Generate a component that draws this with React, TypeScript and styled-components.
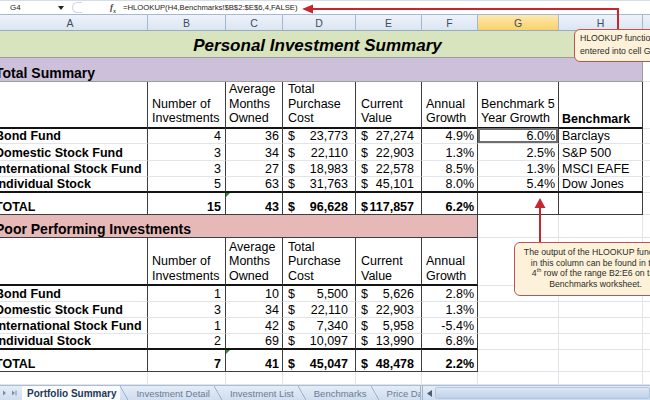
import React from "react";
import styled, { createGlobalStyle, css } from "styled-components";

const COLS = "155px 78px 57px 73px 66px 56px 81px 84px 60px";

type Edge = "none" | "grid" | "soft" | "dark" | "thick";

const edges: Record<Edge, string> = {
    none: "none",
    grid: "1px solid #e1e4e9",
    soft: "1px solid #9c9c9c",
    dark: "1px solid #3d3d3d",
    thick: "2px solid #141414",
};

interface Holding {
    name: string;
    count: string;
    months: string;
    cost: string;
    value: string;
    growth: string;
    bench?: string;
    index?: string;
}

const summary: Holding[] = [
    { name: "Bond Fund", count: "4", months: "36", cost: "23,773", value: "27,274", growth: "4.9%", bench: "6.0%", index: "Barclays" },
    { name: "Domestic Stock Fund", count: "3", months: "34", cost: "22,110", value: "22,903", growth: "1.3%", bench: "2.5%", index: "S&P 500" },
    { name: "International Stock Fund", count: "3", months: "27", cost: "18,983", value: "22,578", growth: "8.5%", bench: "1.3%", index: "MSCI EAFE" },
    { name: "Individual Stock", count: "5", months: "63", cost: "31,763", value: "45,101", growth: "8.0%", bench: "5.4%", index: "Dow Jones" },
];

const poor: Holding[] = [
    { name: "Bond Fund", count: "1", months: "10", cost: "5,500", value: "5,626", growth: "2.8%" },
    { name: "Domestic Stock Fund", count: "3", months: "34", cost: "22,110", value: "22,903", growth: "1.3%" },
    { name: "International Stock Fund", count: "1", months: "42", cost: "7,340", value: "5,958", growth: "-5.4%" },
    { name: "Individual Stock", count: "2", months: "69", cost: "10,097", value: "13,990", growth: "6.8%" },
];

const columns = ["A", "B", "C", "D", "E", "F", "G", "H", "I"];
const tabs = ["Portfolio Summary", "Investment Detail", "Investment List", "Benchmarks", "Price Data"];

const GlobalStyle = createGlobalStyle`
    html, body { margin: 0; padding: 0; }
    body {
        background: #fff;
        font-family: "Liberation Sans", Arial, sans-serif;
    }
`;

const Page = styled.div`
    position: relative;
    width: 650px;
    height: 400px;
    overflow: hidden;
    display: flex;
    flex-direction: column;
    background: #fff;
`;

const FormulaBar = styled.div`
    display: flex;
    align-items: center;
    height: 15px;
    flex-shrink: 0;
    box-sizing: border-box;
    border-top: 1px solid #d5dde8;
    border-bottom: 1px solid #a7b9d0;
    color: #222;
`;

const NameBox = styled.div`
    width: 68px;
    height: 100%;
    box-sizing: border-box;
    display: flex;
    align-items: center;
    justify-content: space-between;
    padding: 0 4px 0 10px;
    font-size: 8px;
`;

const ButtonStub = styled.div`
    width: 10px;
    height: 11px;
    margin-left: 4px;
    box-sizing: border-box;
    border: 1px solid #cdd6e2;
    border-right: none;
    border-radius: 6px 0 0 6px;
`;

const Fx = styled.span`
    margin-left: 28px;
    font-family: "Liberation Serif", serif;
    font-style: italic;
    font-weight: 700;
    font-size: 9px;
    color: #444;
    sub {
        font-size: 6px;
    }
`;

const Formula = styled.span`
    margin-left: 7px;
    font-size: 7.7px;
    white-space: nowrap;
`;

const Sheet = styled.div`
    margin-left: -7px;
    width: 707px;
    color: #000;
`;

const Row = styled.div<{ $h: number }>`
    display: grid;
    grid-template-columns: ${COLS};
    height: ${(p) => p.$h}px;
`;

const ColHead = styled.div<{ $sel?: boolean }>`
    box-sizing: border-box;
    display: flex;
    align-items: center;
    justify-content: center;
    font-size: 10.5px;
    color: #3f4d60;
    border-right: 1px solid #a3b8d2;
    border-bottom: 1px solid #95abc7;
    background: ${(p) => (p.$sel ? "linear-gradient(#fde8b0, #f8d26a)" : "linear-gradient(#eef3fa, #dbe5f2)")};
`;

interface CellProps {
    $r?: Edge;
    $b?: Edge;
    $bg?: string;
    $span?: number;
    $align?: "left" | "right" | "center" | "between";
    $bold?: boolean;
    $size?: number;
    $pl?: number;
    $pr?: number;
    $pb?: number;
    $active?: boolean;
    $flag?: boolean;
}

const justify = { left: "flex-start", right: "flex-end", center: "center", between: "space-between" };

const Cell = styled.div<CellProps>`
    position: relative;
    box-sizing: border-box;
    grid-column: span ${(p) => p.$span ?? 1};
    display: flex;
    align-items: flex-end;
    justify-content: ${(p) => justify[p.$align ?? "left"]};
    padding: 0 ${(p) => p.$pr ?? 3}px ${(p) => p.$pb ?? 0}px ${(p) => p.$pl ?? 3}px;
    border-right: ${(p) => edges[p.$r ?? "grid"]};
    border-bottom: ${(p) => edges[p.$b ?? "grid"]};
    background: ${(p) => p.$bg ?? "transparent"};
    font-size: ${(p) => p.$size ?? 12.5}px;
    line-height: 14px;
    font-weight: ${(p) => (p.$bold ? 700 : 400)};
    white-space: nowrap;
    ${(p) => p.$active && css`
        box-shadow: inset 0 0 0 2px #6e6e6e;
    `}
    ${(p) => p.$flag && css`
        &::before {
            content: "";
            position: absolute;
            left: 0;
            top: 0;
            border-style: solid;
            border-width: 4px 4px 0 0;
            border-color: #2e8b2e transparent transparent transparent;
        }
    `}
`;

const HeadText = styled.div<{ $bold?: boolean }>`
    line-height: 14.5px;
    font-weight: ${(p) => (p.$bold ? 700 : 400)};
`;

const Title = styled.span`
    font-size: 17px;
    font-weight: 700;
    font-style: italic;
    line-height: 19px;
`;

const Filler = styled.div`
    flex: 1;
`;

const TabBar = styled.div`
    display: flex;
    height: 15px;
    flex-shrink: 0;
    box-sizing: border-box;
    border-top: 1px solid #aabdd6;
    background: linear-gradient(#e4ecf7, #d0ddef);
    font-size: 9.5px;
`;

const Nav = styled.div`
    width: 22px;
    display: flex;
    align-items: center;
`;

const TabStrip = styled.div`
    width: 398px;
    display: flex;
    overflow: hidden;
`;

const Tab = styled.div<{ $active?: boolean }>`
    display: flex;
    align-items: center;
    padding: 0 4px 0 ${(p) => (p.$active ? 5 : 4)}px;
    white-space: nowrap;
    color: ${(p) => (p.$active ? "#22385a" : "#6a7b94")};
    font-weight: ${(p) => (p.$active ? 700 : 400)};
    font-size: ${(p) => (p.$active ? 10 : 9.5)}px;
    background: ${(p) => (p.$active ? "#fbfcfe" : "transparent")};
`;

const Slash = styled.div`
    width: 8px;
    flex-shrink: 0;
    margin-right: 4px;
    background: linear-gradient(to top right, transparent calc(50% - 0.7px), #8fa3bf 50%, transparent calc(50% + 0.7px));
`;

const Splitter = styled.div`
    width: 3px;
    border-left: 1px solid #9eb2cc;
    border-right: 1px solid #9eb2cc;
    box-sizing: border-box;
`;

const ScrollButton = styled.div`
    width: 12px;
    display: flex;
    align-items: center;
    justify-content: center;
`;

const Track = styled.div`
    flex: 1;
    margin: 1px 0;
    border: 1px solid #b3c6e0;
    border-radius: 2px;
    background: linear-gradient(#dde7f5, #bfd1ea);
`;

const Callout = styled.div<{ $x: number; $y: number; $w: number; $h: number; $center?: boolean }>`
    position: absolute;
    left: ${(p) => p.$x}px;
    top: ${(p) => p.$y}px;
    width: ${(p) => p.$w}px;
    height: ${(p) => p.$h}px;
    box-sizing: border-box;
    padding: ${(p) => (p.$center ? "4px 4px" : "2px 5px")};
    background: #fdf2d9;
    border: 1px solid #c2514f;
    border-radius: 6px;
    box-shadow: inset 0 0 4px #fffaf0;
    color: #2b2b2b;
    font-size: 8.7px;
    line-height: ${(p) => (p.$center ? 10.7 : 12.5)}px;
    text-align: ${(p) => (p.$center ? "center" : "left")};
    white-space: nowrap;
    sup {
        font-size: 5.5px;
        line-height: 0;
    }
`;

const Arrows = styled.svg`
    position: absolute;
    left: 0;
    top: 0;
    pointer-events: none;
`;

const HoldingRow = ({ h, height, last, bench, active }: { h: Holding; height: number; last: boolean; bench: boolean; active?: boolean }) => {
    const b: Edge = last ? "thick" : "grid";
    return (
        <Row $h={height}>
            <Cell $r="dark" $b={b} $pl={2} $bold>{h.name}</Cell>
            <Cell $r="dark" $b={b} $align="right" $pr={4}>{h.count}</Cell>
            <Cell $r="dark" $b={b} $align="right">{h.months}</Cell>
            <Cell $r="dark" $b={b} $align="between" $pl={5} $pr={7}><span>$</span><span>{h.cost}</span></Cell>
            <Cell $r="dark" $b={b} $align="between" $pl={5} $pr={7}><span>$</span><span>{h.value}</span></Cell>
            <Cell $r="dark" $b={b} $align="right">{h.growth}</Cell>
            {bench ? (
                <>
                    <Cell $r="dark" $b={b} $align="right" $active={active}>{h.bench}</Cell>
                    <Cell $r="dark" $b={b}>{h.index}</Cell>
                </>
            ) : (
                <>
                    <Cell />
                    <Cell />
                </>
            )}
            <Cell />
        </Row>
    );
};

const TotalRow = ({ count, months, cost, value, growth, bench }: { count: string; months: string; cost: string; value: string; growth: string; bench: boolean }) => (
    <Row $h={22}>
        <Cell $r="dark" $b="dark" $pl={2} $bold>TOTAL</Cell>
        <Cell $r="dark" $b="dark" $align="right" $pr={4} $bold>{count}</Cell>
        <Cell $r="dark" $b="dark" $align="right" $bold $flag>{months}</Cell>
        <Cell $r="dark" $b="dark" $align="between" $pl={5} $pr={7} $bold><span>$</span><span>{cost}</span></Cell>
        <Cell $r="dark" $b="dark" $align="between" $pl={5} $pr={7} $bold><span>$</span><span>{value}</span></Cell>
        <Cell $r="dark" $b="dark" $align="right" $bold>{growth}</Cell>
        {bench ? (
            <>
                <Cell $r="dark" $b="dark" />
                <Cell $r="dark" $b="dark" />
            </>
        ) : (
            <>
                <Cell />
                <Cell />
            </>
        )}
        <Cell />
    </Row>
);

const HeaderRow = ({ height, bench }: { height: number; bench: boolean }) => (
    <Row $h={height}>
        <Cell $r="dark" $b="thick" $pb={1} />
        <Cell $r="dark" $b="thick" $pb={1} $pl={4}><HeadText>Number of<br />Investments</HeadText></Cell>
        <Cell $r="dark" $b="thick" $pb={1}><HeadText>Average<br />Months<br />Owned</HeadText></Cell>
        <Cell $r="dark" $b="thick" $pb={1} $pl={5}><HeadText>Total<br />Purchase<br />Cost</HeadText></Cell>
        <Cell $r="dark" $b="thick" $pb={1} $pl={5}><HeadText>Current<br />Value</HeadText></Cell>
        <Cell $r="dark" $b="thick" $pb={1} $pl={4}><HeadText>Annual<br />Growth</HeadText></Cell>
        {bench ? (
            <>
                <Cell $r="dark" $b="thick" $pb={1}><HeadText>Benchmark 5<br />Year Growth</HeadText></Cell>
                <Cell $r="dark" $b="thick" $pb={0}><HeadText $bold>Benchmark</HeadText></Cell>
            </>
        ) : (
            <>
                <Cell />
                <Cell />
            </>
        )}
        <Cell />
    </Row>
);

const App = () => {
    return (
        <Page>
            <GlobalStyle />
            <FormulaBar>
                <NameBox>
                    <span>G4</span>
                    <svg width="6" height="4" viewBox="0 0 6 4"><path d="M0 0 H6 L3 4 Z" fill="#222" /></svg>
                </NameBox>
                <ButtonStub />
                <Fx>f<sub>x</sub></Fx>
                <Formula>=HLOOKUP(H4,Benchmarks!$B$2:$E$6,4,FALSE)</Formula>
            </FormulaBar>

            <Sheet>
                <Row $h={16}>
                    {columns.map((c) => (
                        <ColHead key={c} $sel={c === "G"}>{c}</ColHead>
                    ))}
                </Row>

                <Row $h={27}>
                    <Cell $span={8} $bg="#d7e4bd" $align="center" $r="soft" $b="soft" $pb={2}>
                        <Title>Personal Investment Summary</Title>
                    </Cell>
                    <Cell />
                </Row>

                <Row $h={24}>
                    <Cell $span={8} $bg="#ccc0da" $r="soft" $b="soft" $size={14} $pl={2} $pb={1} $bold>Total Summary</Cell>
                    <Cell />
                </Row>
                <HeaderRow height={46} bench />
                {summary.map((h, i) => (
                    <HoldingRow key={h.name} h={h} height={i === 1 ? 17 : 16} last={i === summary.length - 1} bench active={i === 0} />
                ))}
                <TotalRow count="15" months="43" cost="96,628" value="117,857" growth="6.2%" bench />

                <Row $h={23}>
                    <Cell $span={6} $bg="#e6b9b8" $r="dark" $b="dark" $size={14} $pl={2} $pb={1} $bold>Poor Performing Investments</Cell>
                    <Cell />
                    <Cell />
                    <Cell />
                </Row>
                <HeaderRow height={48} bench={false} />
                {poor.map((h, i) => (
                    <HoldingRow key={h.name} h={h} height={16} last={i === poor.length - 1} bench={false} />
                ))}
                <TotalRow count="7" months="41" cost="45,047" value="48,478" growth="2.2%" bench={false} />

                <Row $h={13}>
                    {columns.map((c) => (
                        <Cell key={c} />
                    ))}
                </Row>
            </Sheet>
            <Filler />

            <TabBar>
                <Nav>
                    <svg width="22" height="14" viewBox="0 0 22 14">
                        <path d="M3 4.5 L6 7 L3 9.5 Z" fill="#7d8ca5" />
                        <path d="M12 4.5 L15 7 L12 9.5 Z M15.5 4.5 H16.5 V9.5 H15.5 Z" fill="#7d8ca5" />
                    </svg>
                </Nav>
                <TabStrip>
                    {tabs.map((t, i) => (
                        <React.Fragment key={t}>
                            <Tab $active={i === 0}>{t}</Tab>
                            {i < tabs.length - 1 && <Slash />}
                        </React.Fragment>
                    ))}
                </TabStrip>
                <Splitter />
                <ScrollButton>
                    <svg width="5" height="7" viewBox="0 0 5 7"><path d="M5 0 V7 L0 3.5 Z" fill="#4d5d78" /></svg>
                </ScrollButton>
                <Track />
            </TabBar>

            <Arrows width="650" height="400" viewBox="0 0 650 400">
                <path d="M618 30 V9 H312" fill="none" stroke="#c8262f" strokeWidth="2" />
                <path d="M302 9 L313 4.5 L313 13.5 Z" fill="#c8262f" />
                <path d="M540 243 V207" fill="none" stroke="#c8262f" strokeWidth="2" />
                <path d="M540 198 L545.5 208 L534.5 208 Z" fill="#c8262f" />
            </Arrows>

            <Callout $x={574} $y={29} $w={110} $h={33}>
                HLOOKUP function<br />entered into cell G4
            </Callout>
            <Callout $x={514} $y={242} $w={163} $h={54} $center>
                The output of the HLOOKUP function<br />
                in this column can be found in the<br />
                4<sup>th</sup> row of the range B2:E6 on the<br />
                Benchmarks worksheet.
            </Callout>
        </Page>
    );
};

export default App;
